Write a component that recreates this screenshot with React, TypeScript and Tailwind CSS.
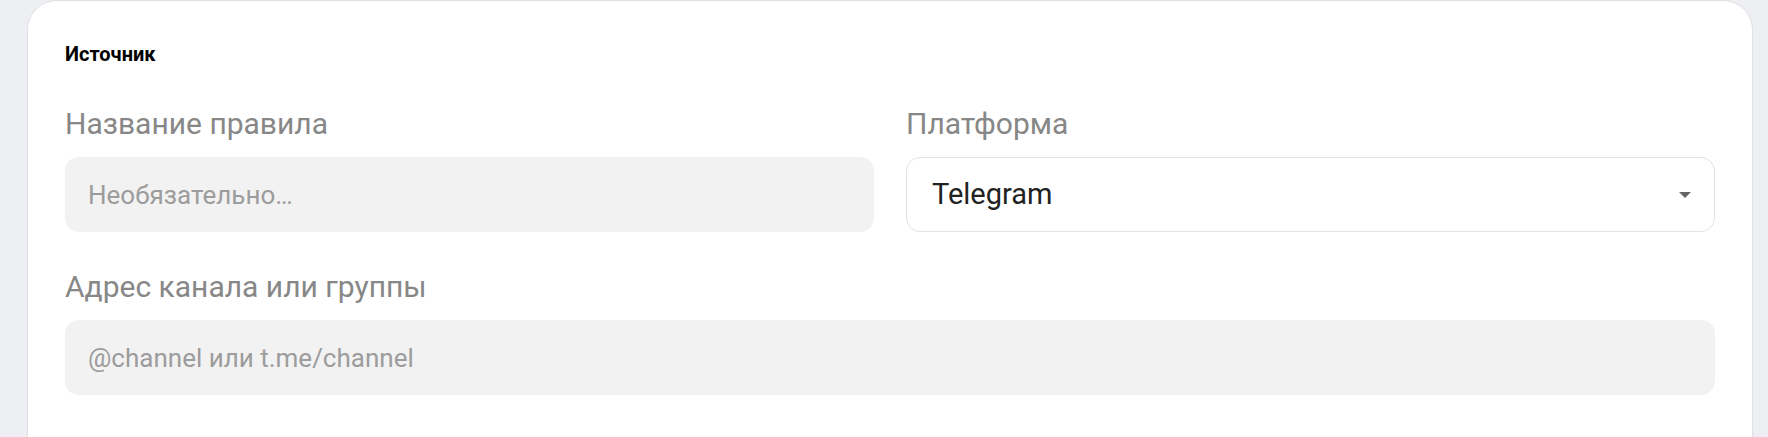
import React from "react";

export default function App() {
  return (
    <div
      className="min-h-screen bg-[#eeeff3] pl-[27px] pr-[15px]"
      style={{ fontFamily: "Roboto, 'Noto Sans', Arial, sans-serif" }}
    >
      <div className="rounded-[30px] border border-[#e1e1e5] bg-white px-[37px] pb-[120px] pt-[41px]">
        <h2 className="mb-[40px] text-[20px] font-bold leading-[24px] text-black">Источник</h2>

        <div className="grid grid-cols-2 gap-x-[32px]">
          <div className="flex flex-col">
            <label className="mb-[15px] text-[30px] leading-[36px] text-[#878787]">Название правила</label>
            <input
              type="text"
              placeholder="Необязательно…"
              className="h-[75px] w-full rounded-[14px] bg-[#f2f2f2] px-[23px] text-[26px] text-[#222] outline-none placeholder:text-[#9c9c9c]"
            />
          </div>
          <div className="flex flex-col">
            <label className="mb-[15px] text-[30px] leading-[36px] text-[#878787]">Платформа</label>
            <div className="relative flex h-[75px] w-full items-center rounded-[14px] border border-[#e3e3e6] bg-white pl-[25px] pr-[23px]">
              <span className="text-[29px] text-[#222]">Telegram</span>
              <svg
                className="ml-auto"
                width="12"
                height="6"
                viewBox="0 0 12 6"
                aria-hidden="true"
              >
                <path d="M0 0 L12 0 L6 6 Z" fill="#666" />
              </svg>
            </div>
          </div>
        </div>

        <div className="mt-[37px] flex flex-col">
          <label className="mb-[15px] text-[30px] leading-[36px] text-[#878787]">Адрес канала или группы</label>
          <input
            type="text"
            placeholder="@channel или t.me/channel"
            className="h-[75px] w-full rounded-[14px] bg-[#f2f2f2] px-[23px] text-[26px] text-[#222] outline-none placeholder:text-[#9c9c9c]"
          />
        </div>
      </div>
    </div>
  );
}
